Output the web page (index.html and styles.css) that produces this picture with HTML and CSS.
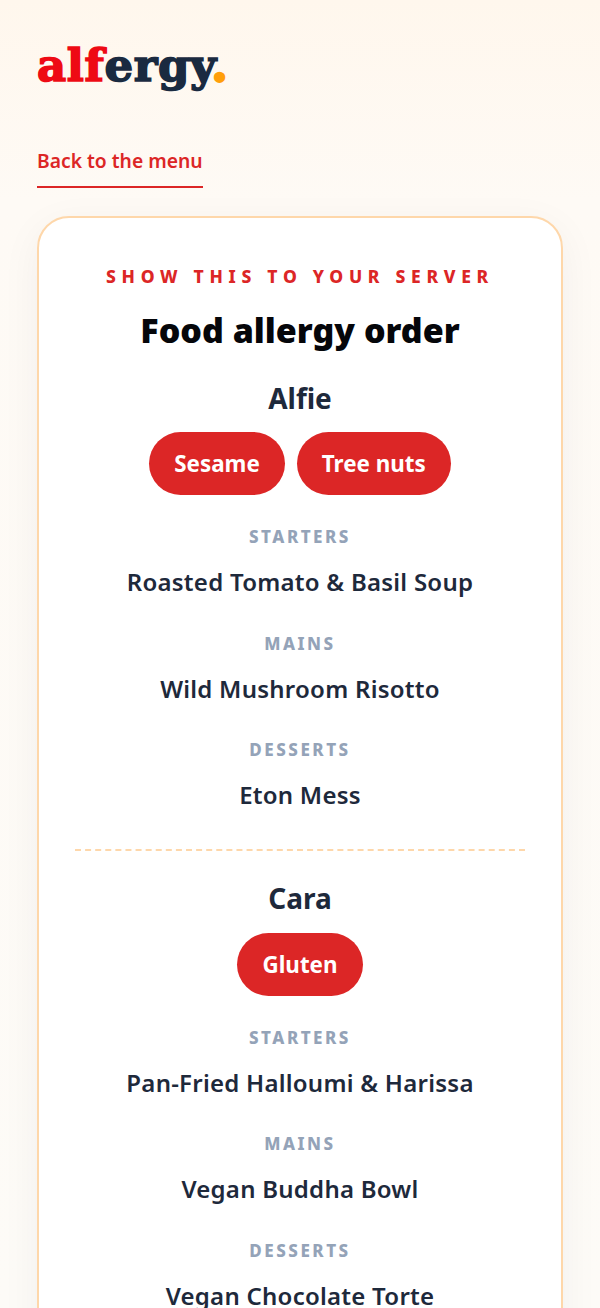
FILE: index.html
```html
<!DOCTYPE html>
<html lang="en">
<head>
<meta charset="utf-8">
<title>Alfergy</title>
<link rel="stylesheet" href="styles.css">
</head>
<body>
<main class="page">
  <header class="logo"><span class="logo-red">alf</span><span class="logo-navy">ergy</span><span class="logo-dot">.</span></header>
  <a class="back" href="#">Back to the menu</a>
  <section class="card">
    <p class="eyebrow">SHOW THIS TO YOUR SERVER</p>
    <h1 class="title">Food allergy order</h1>
    <article class="person">
      <h2 class="name">Alfie</h2>
      <div class="pills"><span class="pill">Sesame</span><span class="pill">Tree nuts</span></div>
      <div class="course"><h3 class="label">STARTERS</h3><p class="dish">Roasted Tomato &amp; Basil Soup</p></div>
      <div class="course"><h3 class="label">MAINS</h3><p class="dish">Wild Mushroom Risotto</p></div>
      <div class="course"><h3 class="label">DESSERTS</h3><p class="dish">Eton Mess</p></div>
    </article>
    <article class="person second">
      <h2 class="name">Cara</h2>
      <div class="pills"><span class="pill">Gluten</span></div>
      <div class="course"><h3 class="label">STARTERS</h3><p class="dish">Pan-Fried Halloumi &amp; Harissa</p></div>
      <div class="course"><h3 class="label">MAINS</h3><p class="dish">Vegan Buddha Bowl</p></div>
      <div class="course"><h3 class="label">DESSERTS</h3><p class="dish">Vegan Chocolate Torte</p></div>
    </article>
  </section>
</main>
</body>
</html>
```
FILE: styles.css
```css
* { box-sizing: border-box; }
html, body { margin: 0; padding: 0; }
body {
  background: linear-gradient(180deg, #fff7ed 0, #fefaf5 200px, #fdfbf7 1308px);
  font-family: "Noto Sans", "Lato", sans-serif;
  color: #1e293b;
  height: 1308px;
  overflow: hidden;
}
.page { padding: 36px 37px 0; }
.logo {
  font-family: "DejaVu Serif", serif;
  font-weight: 700;
  font-size: 45px;
  line-height: 60px;
  height: 60px;
  letter-spacing: 0.6px;
  -webkit-text-stroke: 1.6px currentColor;
}
.logo-red { color: #ee0a14; }
.logo-navy { color: #1a2a40; }
.logo-dot { color: #ff9f0a; -webkit-text-stroke: 3px currentColor; }
.back {
  display: inline-block;
  margin-top: 50px;
  padding-bottom: 10px;
  border-bottom: 2px solid #dc2626;
  color: #dc2626;
  font-size: 19.3px;
  font-weight: 600;
  line-height: 30px;
  text-decoration: none;
}
.card {
  margin-top: 28px;
  background: #fff;
  border: 2px solid #fed7aa;
  border-radius: 32px;
  padding: 45px 36px 0;
  text-align: center;
  box-shadow: 0 10px 40px rgba(30, 41, 59, 0.05);
}
.eyebrow {
  margin: 0;
  color: #dc2626;
  font-size: 17.5px;
  font-weight: 800;
  letter-spacing: 5.7px;
  line-height: 26px;
}
.title {
  margin: 20px 0 0;
  color: #05060a;
  font-size: 34px;
  font-weight: 900;
  line-height: 42px;
}
.person { padding-bottom: 37px; }
.second { border-top: 2px dashed #fed7aa; padding-top: 30px; }
.name {
  margin: 0;
  font-size: 28px;
  font-weight: 700;
  line-height: 34px;
}
.title + .person .name { margin-top: 30px; }
.pills { display: flex; justify-content: center; gap: 12px; margin-top: 17px; }
.pill {
  background: #dc2626;
  color: #fff;
  border-radius: 32px;
  padding: 0 25px;
  height: 63px;
  display: flex;
  align-items: center;
  font-size: 22.4px;
  font-weight: 700;
}
.second .pills { margin-top: 17.5px; }
.course { margin-top: 30px; }
.course + .course { margin-top: 32.5px; }
.label {
  margin: 0;
  color: #94a3b8;
  font-size: 17px;
  font-weight: 800;
  letter-spacing: 2.5px;
  line-height: 24px;
}
.dish {
  margin: 16px 0 0;
  font-size: 24px;
  font-weight: 600;
  letter-spacing: 0.25px;
  line-height: 34px;
}
```
